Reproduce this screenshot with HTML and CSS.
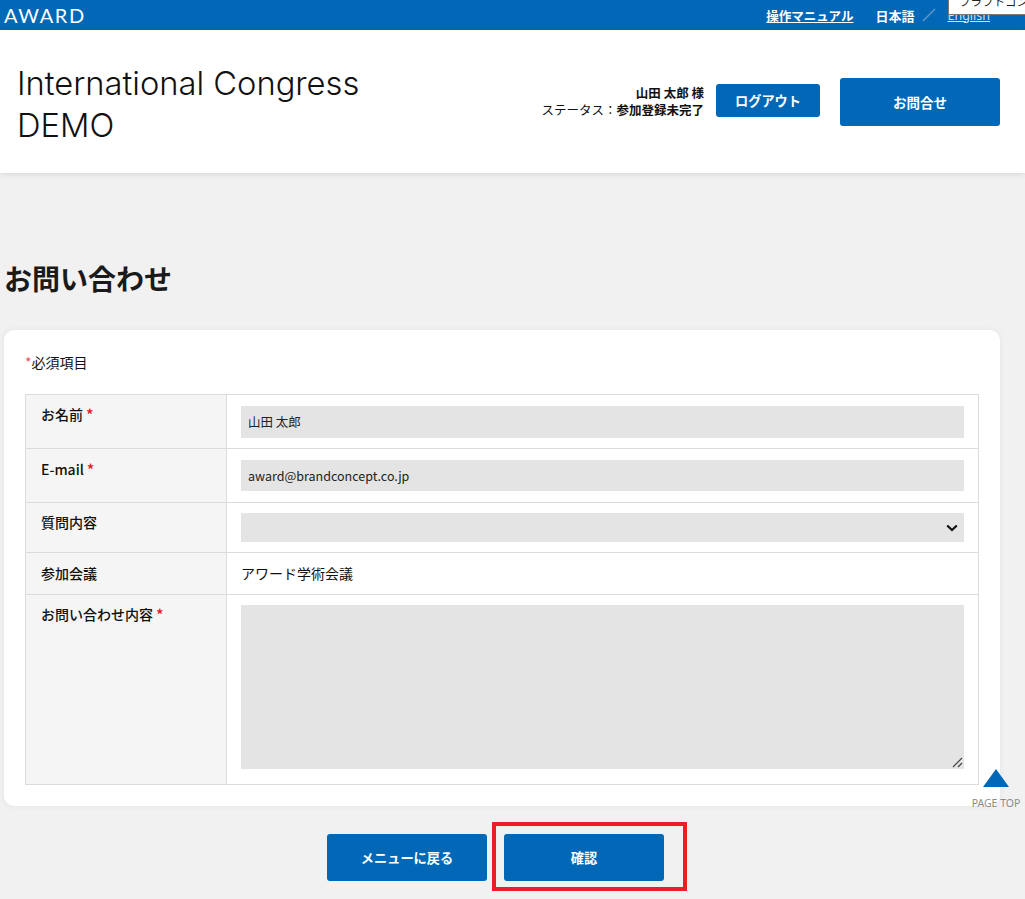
FILE: index.html
```html
<!DOCTYPE html>
<html lang="ja">
<head>
<meta charset="utf-8">
<title>お問い合わせ</title>
<link rel="stylesheet" href="styles.css">
</head>
<body>
<div class="topbar">
  <span class="logo">AWARD</span>
  <nav class="topnav">
    <a class="manual" href="#">操作マニュアル</a>
    <b class="lang">日本語</b>
    <svg class="slash" width="14" height="14" viewBox="0 0 14 14"><path d="M1 13 13 1" stroke="#5f95c8" stroke-width="1.4" fill="none"/></svg>
    <a class="eng" href="#">English</a>
  </nav>
</div>
<div class="tip">フラフトコン</div>
<header class="site-head">
  <h1 class="title">International Congress<br>DEMO</h1>
  <div class="user">
    <div class="user-info"><b>山田 太郎 様</b><br>ステータス：<b>参加登録未完了</b></div>
    <a class="btn btn-logout" href="#">ログアウト</a>
    <a class="btn btn-contact" href="#">お問合せ</a>
  </div>
</header>
<main class="main">
  <h2 class="page-title">お問い合わせ</h2>
  <section class="card">
    <p class="req-note"><span class="star">*</span>必須項目</p>
    <table class="form">
      <tr class="r1"><th>お名前 <span class="star">*</span></th><td><div class="field">山田 太郎</div></td></tr>
      <tr class="r1"><th class="latin">E-mail <span class="star">*</span></th><td><div class="field short">award@brandconcept.co.jp</div></td></tr>
      <tr class="r3"><th>質問内容</th><td class="tight"><div class="field select">
        <svg width="12" height="8" viewBox="0 0 12 8"><path d="M1.2 1.5 6 6 10.8 1.5" stroke="#111" stroke-width="2.2" fill="none"/></svg>
      </div></td></tr>
      <tr class="r4"><th class="latin">参加会議</th><td class="plain">アワード学術会議</td></tr>
      <tr class="r5"><th>お問い合わせ内容 <span class="star">*</span></th><td><div class="area">
        <svg class="grip" width="11" height="11" viewBox="0 0 11 11"><path d="M1 10 10 1M6 10 10 6" stroke="#444" stroke-width="1.2" fill="none"/></svg>
      </div></td></tr>
    </table>
  </section>
  <div class="actions">
    <a class="btn btn-big" href="#">メニューに戻る</a>
    <span class="confirm-wrap"><a class="btn btn-big" href="#">確認</a></span>
  </div>
</main>
<a class="pagetop" href="#">
  <span class="tri"></span>
  <span class="pt-label">PAGE TOP</span>
</a>
</body>
</html>
```
FILE: styles.css
```css
* { box-sizing: border-box; }
html, body { margin: 0; padding: 0; }
body {
  position: relative;
  height: 899px;
  overflow: hidden;
  background: #f1f1f1;
  color: #111;
  font-family: "Noto Sans CJK JP", "Noto Sans", sans-serif;
  font-size: 14px;
}
a { color: inherit; text-decoration: none; }

.topbar {
  height: 30px;
  background: #0068b7;
  color: #fff;
  display: flex;
  align-items: center;
  justify-content: space-between;
  padding: 0 35px 0 4px;
}
.logo {
  font-family: "Lato", sans-serif;
  font-size: 20px;
  font-weight: 400;
  letter-spacing: 1.6px;
  line-height: 30px;
}
.topnav { display: flex; align-items: center; font-size: 12.5px; }
.manual { text-decoration: underline; font-weight: 700; }
.lang { margin-left: 22px; font-weight: 700; font-size: 13px; }
.slash { margin-left: 8px; margin-right: 2px; }
.eng { margin-left: 9px; text-decoration: underline; color: #cfe0f0; font-family: "Noto Sans", sans-serif; }
.tip {
  position: absolute;
  top: -12px;
  left: 948px;
  width: 90px;
  height: 27px;
  padding: 3px 0 0 10px;
  background: #fff;
  border: 1px solid #777;
  font-size: 11.5px;
  line-height: 18px;
  color: #222;
  white-space: nowrap;
  overflow: hidden;
}

.site-head {
  height: 143px;
  background: #fff;
  box-shadow: 0 1px 6px rgba(0, 0, 0, .12);
  display: flex;
  align-items: center;
  justify-content: space-between;
  padding: 0 25px 0 17px;
}
.title {
  margin: 4px 0 0;
  font-family: "Inter", "Liberation Sans", sans-serif;
  font-weight: 300;
  font-size: 32.7px;
  line-height: 42px;
  color: #111;
}
.user { display: flex; align-items: center; }
.user-info {
  text-align: right;
  font-size: 12.5px;
  line-height: 17px;
  color: #111;
  margin: 0 12px 2px 0;
}
.user-info b { font-weight: 700; }
.btn {
  display: flex;
  align-items: center;
  justify-content: center;
  background: #0068b7;
  color: #fff;
  font-weight: 700;
  border-radius: 3px;
}
.btn-logout { width: 104px; height: 33px; font-size: 13.2px; margin: 0 20px 2px 0; }
.btn-contact { width: 160px; height: 48px; font-size: 13.5px; margin-top: 1px; }

.main { padding: 0 25px 0 4px; }
.page-title {
  margin: 0;
  padding-top: 86px;
  height: 157px;
  font-size: 28px;
  line-height: 38px;
  font-weight: 700;
  color: #1a1a1a;
}
.card {
  height: 476px;
  background: #fff;
  border-radius: 10px;
  box-shadow: 0 0 6px rgba(0, 0, 0, .06);
  padding: 22px 21px 0;
}
.req-note { margin: 0 0 22px; font-size: 14px; line-height: 20px; height: 20px; }
.star { color: #e8202a; }
.req-note .star { color: #f0505a; }
.form {
  width: 954px;
  border-collapse: collapse;
  table-layout: fixed;
  font-size: 14px;
}
.form th, .form td { border: 1px solid #dcdcdc; vertical-align: top; padding: 0; }
.form th {
  width: 201px;
  background: #f5f5f5;
  text-align: left;
  font-weight: 500;
  padding: 9px 15px 0;
  line-height: 20px;
}
.form th .star { font-weight: 700; }
.form th.latin { padding-top: 10px; }
.form td { padding: 11px 14px 0; }
.form td.tight { padding-top: 10px; }
.r1 { height: 54px; }
.r3 { height: 50px; }
.r4 { height: 42px; }
.r5 { height: 190px; }
.form .plain { padding: 10px 14px 0; line-height: 20px; }
.field {
  height: 32px;
  background: #e4e4e4;
  padding: 0 7px;
  line-height: 32px;
  font-size: 12.5px;
  color: #222;
}
.field.short { height: 31px; line-height: 32px; }
.select {
  height: 29px;
  display: flex;
  align-items: center;
  justify-content: flex-end;
  padding-right: 6px;
}
.area {
  position: relative;
  height: 164px;
  margin-top: -1px;
  background: #e4e4e4;
}
.grip { position: absolute; right: 1px; bottom: 1px; }

.actions {
  display: flex;
  justify-content: flex-start;
  padding-left: 323px;
  margin-top: 16px;
  height: 69px;
}
.btn-big { width: 160px; height: 47px; font-size: 13.2px; }
.confirm-wrap {
  margin-left: 5px;
  border: 4px solid #ee1c25;
  width: 195px;
  height: 69px;
  padding: 8px 0 0 8px;
}
.actions > .btn-big { margin-top: 12px; }

.pagetop {
  position: absolute;
  left: 972px;
  top: 769px;
  width: 48px;
  display: flex;
  flex-direction: column;
  align-items: center;
}
.tri {
  width: 0;
  height: 0;
  border-left: 13px solid transparent;
  border-right: 13px solid transparent;
  border-bottom: 18px solid #0068b7;
}
.pt-label {
  margin-top: 9px;
  font-family: "Noto Sans", sans-serif;
  font-size: 10.5px;
  line-height: 14px;
  color: #8a8a8a;
  white-space: nowrap;
}
```
